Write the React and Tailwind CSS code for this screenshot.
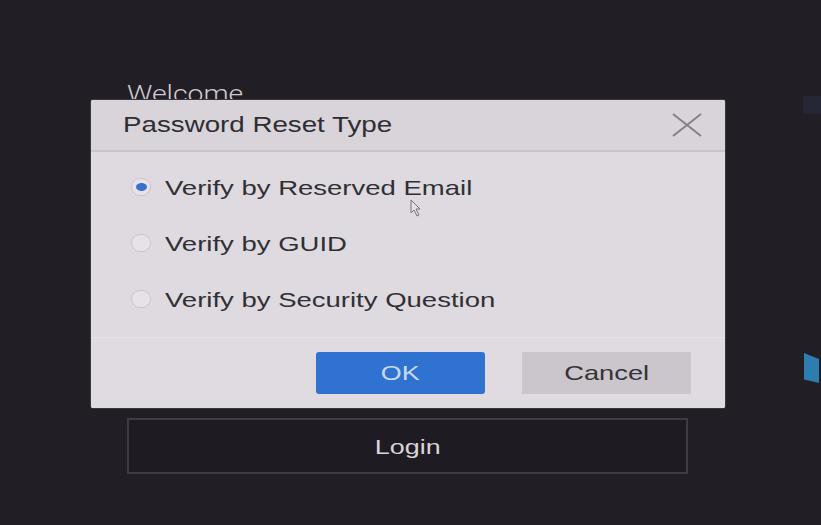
import React from "react";

const S = ({ children, origin = "origin-left", sx = "scale-x-[1.28]" }) => (
  <span className={`inline-block ${sx} ${origin}`}>{children}</span>
);

function Radio({ checked, label }) {
  return (
    <div className="flex h-[56px] items-center">
      <div className="ml-[40px] flex h-[18px] w-[20px] items-center justify-center rounded-full border border-[#c9c5ca] bg-[#e6e2e7]">
        {checked && <div className="h-[8px] w-[11px] rounded-[50%] bg-[#3a6fcf]" />}
      </div>
      <div className="ml-[14px] text-[21px] leading-[21px] text-[#303034]">
        <span className="inline-block origin-left scale-x-[1.31]">{label}</span>
      </div>
    </div>
  );
}

export default function App() {
  return (
    <div
      className="relative h-[525px] w-[821px] overflow-hidden bg-[#221e25]"
      style={{ fontFamily: '"Liberation Sans", Arial, sans-serif' }}
    >
      {/* background login panel */}
      <div className="flex flex-col pl-[127px] pt-[80px]">
        <div
          className="h-[28px] text-[24px] font-light leading-[28px] text-[#cfcbd0]"
          style={{ fontFamily: 'Roboto, "Liberation Sans", sans-serif' }}
        >
          <span className="inline-block origin-left scale-x-[1.18]">Welcome</span>
        </div>
        <button className="mt-[310px] flex h-[56px] w-[561px] items-center justify-center border-2 border-[#3f3b42] bg-[#1f1b22] pt-[2px] text-[21px] text-[#d8d4d9]">
          <S origin="origin-center">Login</S>
        </button>
      </div>

      {/* right edge decorations */}
      <div className="absolute left-[803px] top-[96px] h-[18px] w-[18px] bg-[#282c42] opacity-60" />
      <div
        className="absolute left-[804px] top-[353px] h-[30px] w-[15px] bg-[#2c7db0]"
        style={{ clipPath: "polygon(0 0, 100% 20%, 100% 100%, 0 88%)" }}
      />

      {/* dialog */}
      <div className="absolute left-[91px] top-[100px] flex h-[308px] w-[634px] flex-col overflow-hidden rounded-[2px] bg-[#dedadf] shadow-[0_0_0_1px_#3a363c]">
        <div className="flex h-[52px] shrink-0 items-center justify-between border-b-2 border-[#c8c4c9] bg-[#d8d4d9] pl-[32px] pr-[22px]">
          <div className="text-[22px] leading-[22px] text-[#2e2e32]">
            <S sx="scale-x-[1.26]">Password Reset Type</S>
          </div>
          <svg width="32" height="24" viewBox="0 0 32 24">
            <path d="M2 1 L30 23 M30 1 L2 23" stroke="#858186" strokeWidth="2" fill="none" />
          </svg>
        </div>
        <div className="flex flex-col pt-[7px]">
          <Radio checked label="Verify by Reserved Email" />
          <Radio label="Verify by GUID" />
          <Radio label="Verify by Security Question" />
        </div>
        <div className="mt-auto flex h-[71px] items-center justify-end gap-[37px] border-t border-[#e6e2e7] bg-[#dfdbe0] pr-[34px]">
          <button className="flex h-[42px] w-[169px] items-center justify-center rounded-[3px] bg-[#2f72cf] text-[21px] text-[#c9d9f2]">
            <S origin="origin-center">OK</S>
          </button>
          <button className="flex h-[42px] w-[169px] items-center justify-center bg-[#cac6cb] text-[21px] text-[#343438]">
            <S origin="origin-center" sx="scale-x-[1.3]">Cancel</S>
          </button>
        </div>
      </div>

      {/* mouse cursor */}
      <svg className="absolute left-[410px] top-[199px]" width="12" height="18" viewBox="0 0 12 18">
        <path d="M1 1 L1 14 L4 11 L7 17 L9 16 L6 10 L10 10 Z" fill="#e4e0e5" stroke="#77737a" strokeWidth="1" />
      </svg>
    </div>
  );
}
